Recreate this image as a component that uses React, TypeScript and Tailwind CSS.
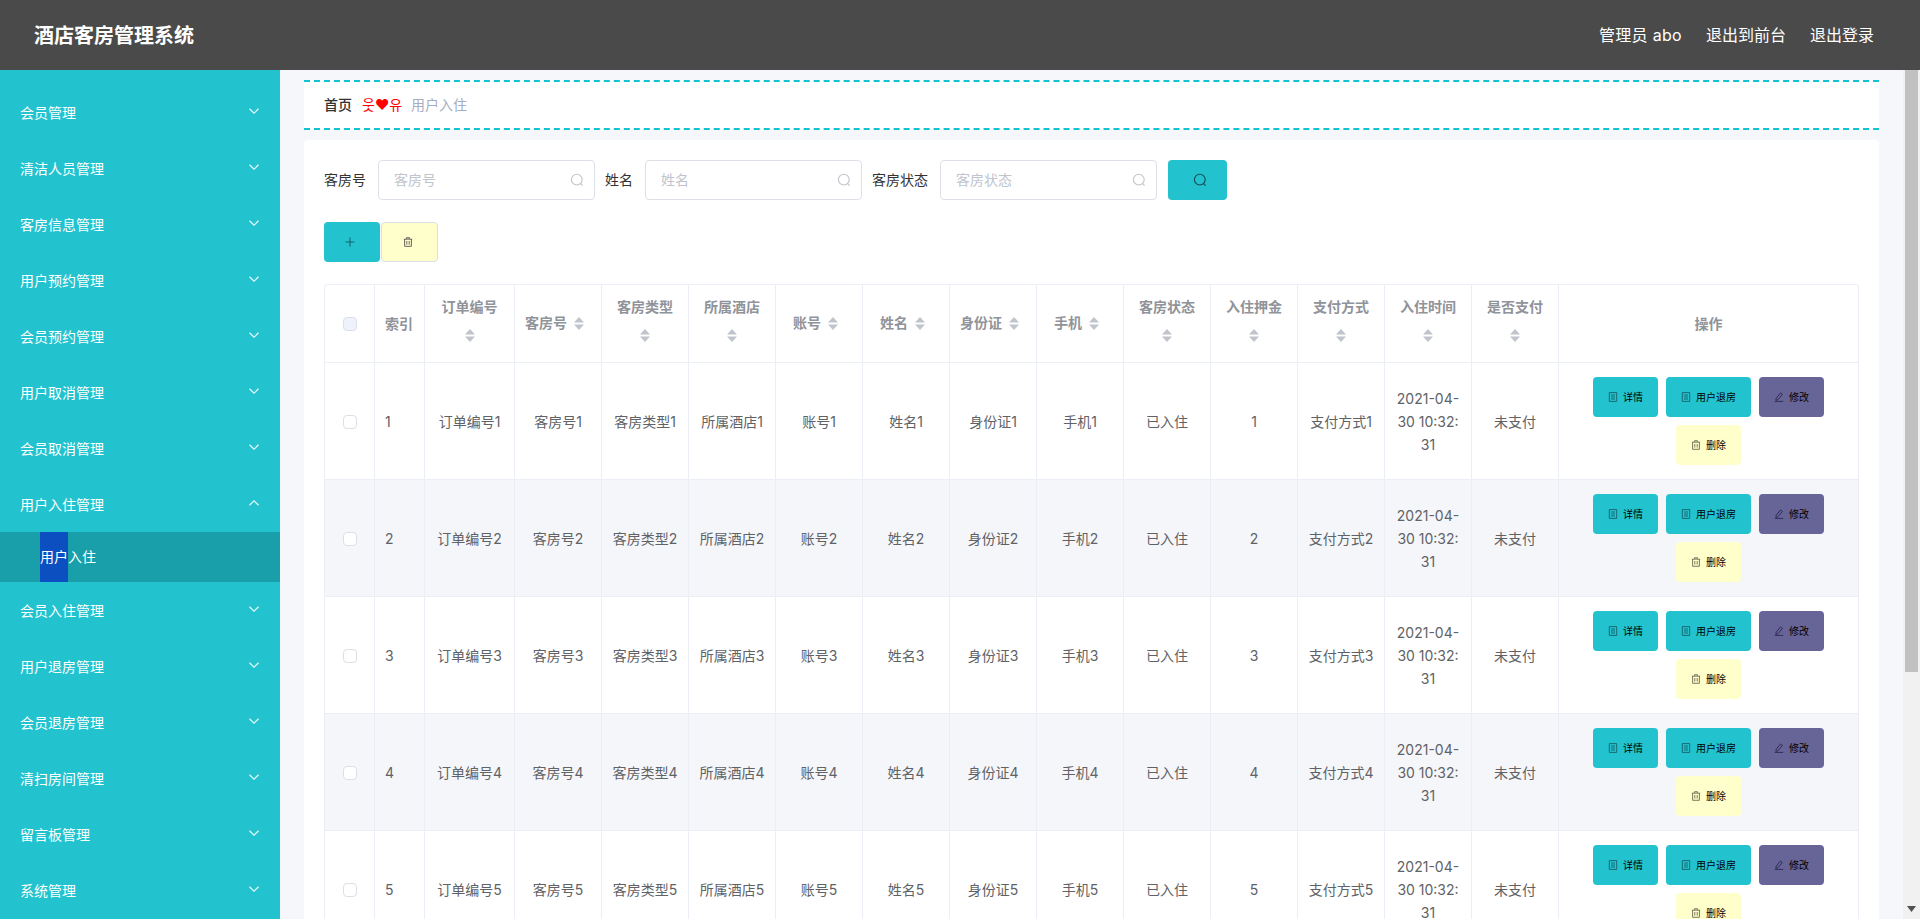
import React from "react";

const menus = ["会员管理","清洁人员管理","客房信息管理","用户预约管理","会员预约管理","用户取消管理","会员取消管理","用户入住管理","会员入住管理","用户退房管理","会员退房管理","清扫房间管理","留言板管理","系统管理"];
const cols = [
  { t: "订单编号", w: "w-[90px]" }, { t: "客房号", w: "w-[87px]" }, { t: "客房类型", w: "w-[87px]" }, { t: "所属酒店", w: "w-[87px]" },
  { t: "账号", w: "w-[87px]" }, { t: "姓名", w: "w-[87px]" }, { t: "身份证", w: "w-[87px]" }, { t: "手机", w: "w-[87px]" },
  { t: "客房状态", w: "w-[87px]" }, { t: "入住押金", w: "w-[87px]" }, { t: "支付方式", w: "w-[87px]" }, { t: "入住时间", w: "w-[87px]" }, { t: "是否支付", w: "w-[87px]" },
];

function Chevron({ up }: { up?: boolean }) {
  return (
    <svg width="12" height="12" viewBox="0 0 12 12" fill="none" stroke="#e8fbfc" strokeWidth="1.2" className="mt-[-4px]">
      <path d={up ? "M1.5 8.2 6 3.8l4.5 4.4" : "M1.5 3.8 6 8.2l4.5-4.4"} />
    </svg>
  );
}
function SearchIcon({ color, size = 14 }: { color: string; size?: number }) {
  return (
    <svg width={size} height={size} viewBox="0 0 14 14" fill="none" stroke={color} strokeWidth="1.1">
      <circle cx="6.8" cy="6.6" r="5.4" />
      <path d="m10.6 10.6 2 2" />
    </svg>
  );
}
function Trash({ color = "#555" }: { color?: string }) {
  return (
    <svg width="10" height="10" viewBox="0 0 10 10" fill="none" stroke={color} strokeWidth="0.9">
      <path d="M.8 2.2h8.4M3.6 2V.7h2.8V2M1.6 2.2v7.1h6.8V2.2M3.8 4v3.6M6.2 4v3.6" />
    </svg>
  );
}
function Doc() {
  return (
    <svg width="10" height="10" viewBox="0 0 10 10" fill="none" stroke="#17606a" strokeWidth="0.9">
      <path d="M1.3.6h7.4v8.8H1.3zM3 3h4M3 5h4M3 7h4" />
    </svg>
  );
}
function Edit() {
  return (
    <svg width="10" height="10" viewBox="0 0 10 10" fill="none" stroke="#2a2850" strokeWidth="0.9">
      <path d="M2.2 6.2 6.6.9l1.8 1.5-4.4 5.3-2.1.6zM.8 9.4h8.4" />
    </svg>
  );
}
function Caret() {
  return (
    <span className="inline-flex h-[34px] w-6 items-center justify-center align-middle">
      <svg width="10" height="13" viewBox="0 0 10 13" fill="#c0c4cc"><path d="M5 0l5 5.4H0zM5 13 0 7.6h10z" /></svg>
    </span>
  );
}
function OpBtn({ bg, icon, label, w }: { bg: string; icon: React.ReactNode; label: string; w: string }) {
  return (
    <button className={`flex h-10 items-center justify-center gap-[5px] rounded text-[10px] text-black ${bg} ${w}`}>
      {icon}
      <span>{label}</span>
    </button>
  );
}
function Field({ label, ph }: { label: string; ph: string }) {
  return (
    <div className="flex items-center gap-3">
      <span className="text-sm text-[#333]">{label}</span>
      <div className="flex h-10 w-[217px] items-center justify-between rounded border border-[#dcdfe6] bg-white pl-[15px] pr-[10px]">
        <span className="text-sm text-[#c0c4cc]">{ph}</span>
        <SearchIcon color="#c0c4cc" />
      </div>
    </div>
  );
}

const td = "border-b border-r border-[#ebeef5] px-[10px] text-center text-sm leading-[23px] text-[#606266]";

export default function App() {
  return (
    <div className="flex h-screen flex-col overflow-hidden bg-[#f5f7fa] [font-family:'Inter','Noto_Sans_CJK_SC',sans-serif]">
      <header className="flex h-[70px] shrink-0 items-center justify-between bg-[#4a4a4a] pl-[34px] pr-[46px] text-white">
        <div className="pt-[2px] text-[20px] font-bold">酒店客房管理系统</div>
        <div className="flex gap-6 text-base">
          <span className="tracking-[0.3px]">管理员 abo</span>
          <span>退出到前台</span>
          <span>退出登录</span>
        </div>
      </header>
      <div className="flex min-h-0 flex-1">
        <aside className="w-[280px] shrink-0 overflow-hidden bg-[#22c3ce] pt-[14px] text-sm text-white">
          {menus.map((m) => (
            <React.Fragment key={m}>
              <div className="flex h-14 items-center justify-between pl-5 pr-[20px] pt-[2px]">
                <span>{m}</span>
                <Chevron up={m === "用户入住管理"} />
              </div>
              {m === "用户入住管理" && (
                <div className="flex h-[50px] items-stretch bg-[#189fa9] pl-10">
                  <span className="flex items-center bg-[#0b4fc1]">用户</span>
                  <span className="flex items-center">入住</span>
                </div>
              )}
            </React.Fragment>
          ))}
        </aside>
        <main className="min-w-0 flex-1 overflow-hidden px-6 pt-[10px]">
          <nav className="flex h-[50px] items-center border-y-2 border-dashed border-[#12c4d1] bg-white pl-5 text-sm">
            <span className="font-medium text-[#303133]">首页</span>
            <span className="ml-[10px] mr-[9px] text-[#ff0000]">웃♥유</span>
            <span className="text-[#a5adc2]">用户入住</span>
          </nav>
          <section className="mt-[10px] rounded bg-white px-5 pb-[300px] pt-5">
            <div className="flex items-center gap-[10px]">
              <Field label="客房号" ph="客房号" />
              <Field label="姓名" ph="姓名" />
              <Field label="客房状态" ph="客房状态" />
              <button className="ml-[1px] flex h-10 w-[59px] items-center justify-center rounded bg-[#22c3ce] pl-1">
                <SearchIcon color="#124c55" />
              </button>
            </div>
            <div className="mt-[22px] flex gap-[1px]">
              <button className="flex h-10 w-14 items-center justify-center rounded bg-[#22c3ce] pr-1">
                <svg width="10" height="10" viewBox="0 0 10 10" stroke="#17606a" strokeWidth="1"><path d="M5 .5v9M.5 5h9" /></svg>
              </button>
              <button className="flex h-10 w-[57px] items-center justify-center rounded border border-[#dcdfe6] bg-[#ffffcc] pr-1">
                <Trash />
              </button>
            </div>
            <div className="mt-[22px] w-[1535px] rounded-t border-l border-t border-[#ebeef5]">
              <table className="w-[1534px] table-fixed border-separate border-spacing-0">
                <colgroup>
                  <col className="w-[50px]" />
                  <col className="w-[50px]" />
                  {cols.map((c) => <col key={c.t} className={c.w} />)}
                  <col className="w-[300px]" />
                </colgroup>
                <thead>
                  <tr className="h-[78px]">
                    <th className={td}>
                      <span className="mx-auto block h-[14px] w-[14px] rounded-sm border border-[#dcdfe6] bg-[#edf2fc]" />
                    </th>
                    <th className={`${td} !text-left font-bold !text-[#909399]`}>索引</th>
                    {cols.map((c) => (
                      <th key={c.t} className={`${td} font-bold !text-[#909399]`}>{c.t}<Caret /></th>
                    ))}
                    <th className={`${td} font-bold !text-[#909399]`}>操作</th>
                  </tr>
                </thead>
                <tbody>
                  {[1, 2, 3, 4, 5].map((n) => (
                    <tr key={n} className={`h-[117px] ${n % 2 === 0 ? "bg-[#f5f6fa]" : "bg-white"}`}>
                      <td className={td}>
                        <span className="mx-auto mt-[2px] block h-[14px] w-[14px] rounded-sm border border-[#dcdfe6] bg-white" />
                      </td>
                      <td className={`${td} !text-left`}>{n}</td>
                      <td className={td}>订单编号{n}</td>
                      <td className={td}>客房号{n}</td>
                      <td className={td}>客房类型{n}</td>
                      <td className={td}>所属酒店{n}</td>
                      <td className={td}>账号{n}</td>
                      <td className={td}>姓名{n}</td>
                      <td className={td}>身份证{n}</td>
                      <td className={td}>手机{n}</td>
                      <td className={td}>已入住</td>
                      <td className={td}>{n}</td>
                      <td className={td}>支付方式{n}</td>
                      <td className="border-b border-r border-[#ebeef5] text-center text-sm leading-[23px] text-[#606266]">2021-04-<br />30 10:32:<br />31</td>
                      <td className={td}>未支付</td>
                      <td className={td}>
                        <div className="flex flex-wrap justify-center gap-2">
                          <OpBtn bg="bg-[#22c3ce]" icon={<Doc />} label="详情" w="w-[65px]" />
                          <OpBtn bg="bg-[#22c3ce]" icon={<Doc />} label="用户退房" w="w-[85px]" />
                          <OpBtn bg="bg-[#676498]" icon={<Edit />} label="修改" w="w-[65px]" />
                          <OpBtn bg="bg-[#ffffcc]" icon={<Trash color="#6b6b50" />} label="删除" w="w-[65px]" />
                        </div>
                      </td>
                    </tr>
                  ))}
                </tbody>
              </table>
            </div>
          </section>
        </main>
        <div className="flex w-[17px] shrink-0 flex-col items-center bg-[#f1f1f1]">
          <div className="h-[602px] w-[13px] bg-[#c1c1c1]" />
          <svg width="9" height="6" viewBox="0 0 9 6" fill="#505050" className="mb-[7px] mt-auto">
            <path d="M0 0h9L4.5 6z" />
          </svg>
        </div>
      </div>
    </div>
  );
}
